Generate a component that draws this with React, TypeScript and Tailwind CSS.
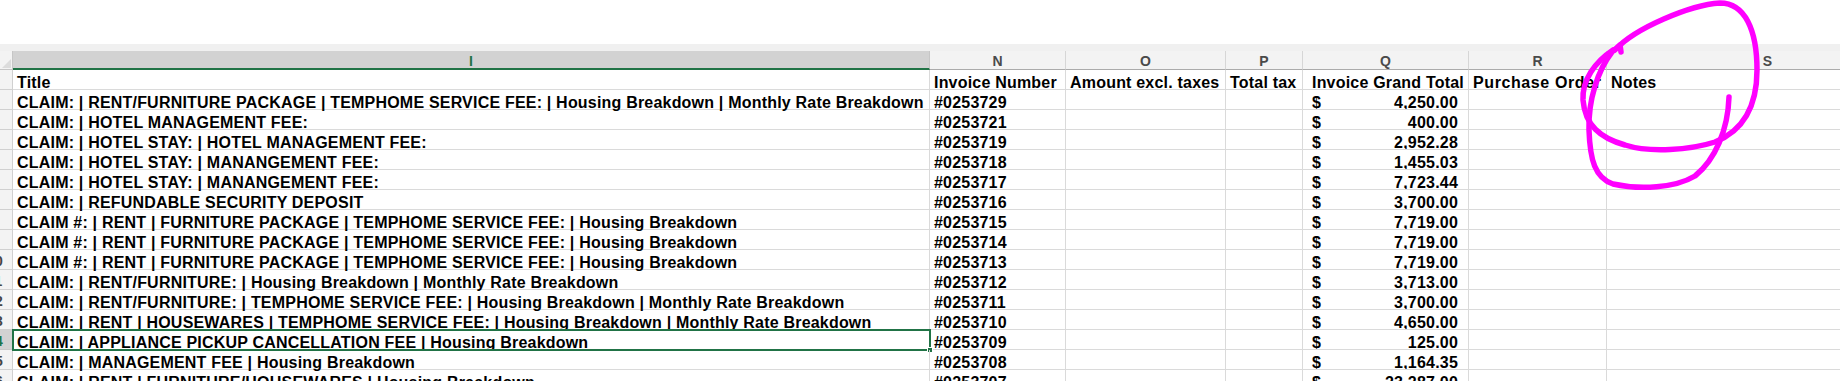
import React from 'react';

type Row = { n: number; title: string; inv: string; total: string };

const rows: Row[] = [
  { n: 2, title: 'CLAIM: | RENT/FURNITURE PACKAGE | TEMPHOME SERVICE FEE: | Housing Breakdown | Monthly Rate Breakdown', inv: '#0253729', total: '4,250.00' },
  { n: 3, title: 'CLAIM: | HOTEL MANAGEMENT FEE:', inv: '#0253721', total: '400.00' },
  { n: 4, title: 'CLAIM: | HOTEL STAY: | HOTEL MANAGEMENT FEE:', inv: '#0253719', total: '2,952.28' },
  { n: 5, title: 'CLAIM: | HOTEL STAY: | MANANGEMENT FEE:', inv: '#0253718', total: '1,455.03' },
  { n: 6, title: 'CLAIM: | HOTEL STAY: | MANANGEMENT FEE:', inv: '#0253717', total: '7,723.44' },
  { n: 7, title: 'CLAIM: | REFUNDABLE SECURITY DEPOSIT', inv: '#0253716', total: '3,700.00' },
  { n: 8, title: 'CLAIM #: | RENT | FURNITURE PACKAGE | TEMPHOME SERVICE FEE: | Housing Breakdown', inv: '#0253715', total: '7,719.00' },
  { n: 9, title: 'CLAIM #: | RENT | FURNITURE PACKAGE | TEMPHOME SERVICE FEE: | Housing Breakdown', inv: '#0253714', total: '7,719.00' },
  { n: 10, title: 'CLAIM #: | RENT | FURNITURE PACKAGE | TEMPHOME SERVICE FEE: | Housing Breakdown', inv: '#0253713', total: '7,719.00' },
  { n: 11, title: 'CLAIM: | RENT/FURNITURE: | Housing Breakdown | Monthly Rate Breakdown', inv: '#0253712', total: '3,713.00' },
  { n: 12, title: 'CLAIM: | RENT/FURNITURE: | TEMPHOME SERVICE FEE: | Housing Breakdown | Monthly Rate Breakdown', inv: '#0253711', total: '3,700.00' },
  { n: 13, title: 'CLAIM: | RENT | HOUSEWARES | TEMPHOME SERVICE FEE: | Housing Breakdown | Monthly Rate Breakdown', inv: '#0253710', total: '4,650.00' },
  { n: 14, title: 'CLAIM: | APPLIANCE PICKUP CANCELLATION FEE | Housing Breakdown', inv: '#0253709', total: '125.00' },
  { n: 15, title: 'CLAIM: | MANAGEMENT FEE | Housing Breakdown', inv: '#0253708', total: '1,164.35' },
  { n: 16, title: 'CLAIM: | RENT | FURNITURE/HOUSEWARES | Housing Breakdown', inv: '#0253707', total: '23,287.00' },
];

const SELECTED = 14;

const cell = 'h-[20px] shrink-0 border-r border-b border-[#dadada] overflow-hidden whitespace-nowrap leading-[21px] pt-[2px] pl-[4px]';

// row number column is mostly scrolled out of view, only the last digit peeks in
const RowHead: React.FC<{ n: number }> = ({ n }) => (
  <div
    className={`h-[20px] w-[13px] shrink-0 overflow-hidden border-b border-r ${
      n === SELECTED ? 'bg-[#d2d2d2] border-r-[#217346] border-b-[#c8c8c8]' : 'bg-[#f3f3f3] border-[#d0d0d0]'
    }`}
  >
    <div
      className={`-ml-[23px] w-[36px] text-center text-[14px] leading-[22px] ${
        n === SELECTED ? 'text-[#217346] font-bold' : 'text-[#444]'
      }`}
    >
      {n}
    </div>
  </div>
);

const ColHead: React.FC<{ w: string; label: string }> = ({ w, label }) => (
  <div className={`${w} h-[19px] shrink-0 bg-[#f3f3f3] border-r border-b border-r-[#d6d6d6] border-b-[#ababab] text-center text-[14px] font-bold leading-[21px] text-[#4a4a4a]`}>
    {label}
  </div>
);

export default function App() {
  return (
    <div className="relative w-[1840px] h-[381px] overflow-hidden bg-white text-black font-['Liberation_Sans',Arial,sans-serif]">
      <div className="h-[44px]" />
      <div className="h-[7px] bg-[#f0f0f0]" />

      {/* column headers */}
      <div className="flex">
        <div className="relative w-[13px] h-[19px] shrink-0 bg-[#f3f3f3] border-r border-b border-[#c6c6c6]">
          <div className="absolute right-[1px] bottom-[1px] w-0 h-0 border-l-[9px] border-l-transparent border-b-[9px] border-b-[#dcdcdc]" />
        </div>
        <div className="w-[917px] h-[19px] shrink-0 bg-[#d2d2d2] border-r border-r-[#c6c6c6] border-b-2 border-b-[#217346] text-center text-[14px] font-bold leading-[20px] text-[#217346]">
          I
        </div>
        <ColHead w="w-[136px]" label="N" />
        <ColHead w="w-[160px]" label="O" />
        <ColHead w="w-[77px]" label="P" />
        <ColHead w="w-[166px]" label="Q" />
        <ColHead w="w-[138px]" label="R" />
        <ColHead w="w-[322px]" label="S" />
      </div>

      {/* header row */}
      <div className="flex text-[16px] font-bold tracking-[0.2px]">
        <RowHead n={1} />
        <div className={`${cell} w-[917px]`}>Title</div>
        <div className={`${cell} w-[136px]`}>Invoice Number</div>
        <div className={`${cell} w-[160px]`}>Amount excl. taxes</div>
        <div className={`${cell} w-[77px]`}>Total tax</div>
        <div className={`${cell} w-[166px] pl-[9px]`}>Invoice Grand Total</div>
        <div className={`${cell} w-[138px] tracking-[0.6px]`}>Purchase Order</div>
        <div className={`${cell} w-[322px]`}>Notes</div>
      </div>

      {rows.map((r) => (
        <div key={r.n} className="flex text-[16px] font-bold tracking-[0.2px]">
          <RowHead n={r.n} />
          <div className={`${cell} w-[917px] relative overflow-visible`}>
            {r.title}
            {r.n === SELECTED && (
              <div className="absolute -left-[1px] -top-[1px] w-[919px] h-[22px] border-2 border-[#217346]">
                <div className="absolute -right-[4px] -bottom-[4px] w-[6px] h-[6px] bg-[#217346] border border-white" />
              </div>
            )}
          </div>
          <div className={`${cell} w-[136px]`}>{r.inv}</div>
          <div className={`${cell} w-[160px]`} />
          <div className={`${cell} w-[77px]`} />
          <div className={`${cell} w-[166px] flex justify-between pl-[9px] pr-[10px]`}>
            <span>$</span>
            <span>{r.total}</span>
          </div>
          <div className={`${cell} w-[138px]`} />
          <div className={`${cell} w-[322px]`} />
        </div>
      ))}

      {/* hand-drawn annotation */}
      <svg className="pointer-events-none absolute left-0 top-0" width="1840" height="381" viewBox="0 0 1840 381">
        <g fill="none" stroke="#ff00ff" strokeWidth="5.5" strokeLinecap="round" strokeLinejoin="round">
          <path d="M1615 50 C1635 28 1690 5 1720 3 C1745 3 1757 30 1757 70 C1757 105 1745 130 1715 142 C1690 150 1650 153 1625 145 C1600 138 1585 125 1583 100 C1582 80 1595 62 1613 50" />
          <path d="M1729 97 C1728 130 1715 160 1695 176 C1675 188 1640 190 1613 184 C1595 178 1590 160 1589 130 C1588 100 1598 70 1612 52 L1620 45 L1621 52" />
        </g>
      </svg>
    </div>
  );
}
